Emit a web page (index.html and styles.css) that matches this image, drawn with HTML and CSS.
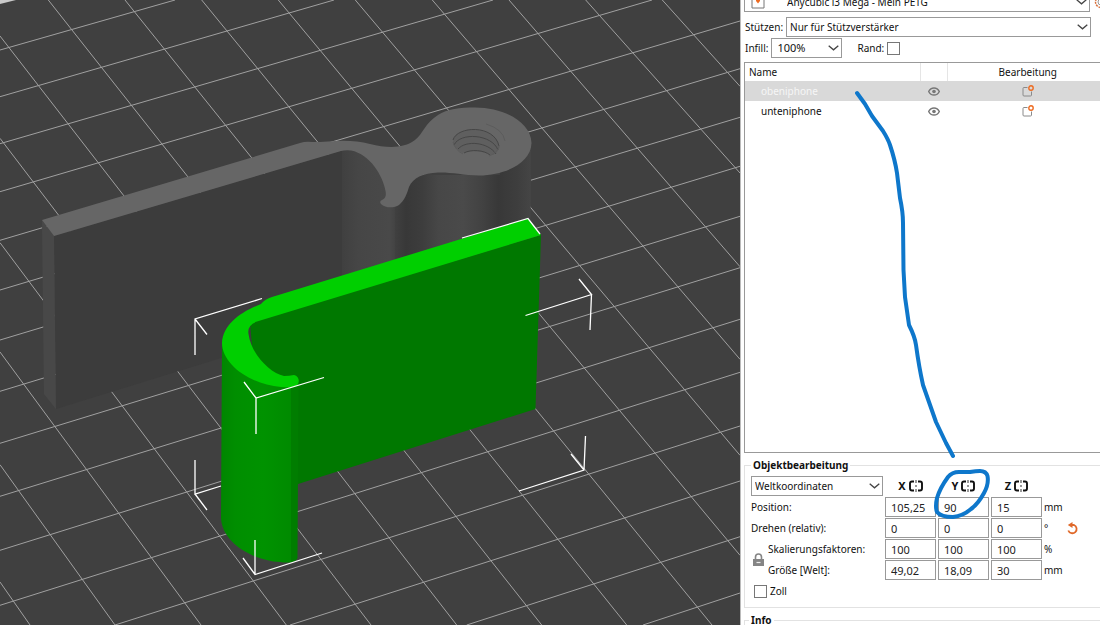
FILE: index.html
```html
<!DOCTYPE html>
<html lang="de">
<head>
<meta charset="utf-8">
<title>Objektbearbeitung</title>
<link rel="stylesheet" href="styles.css">
</head>
<body>
<svg class="defs" aria-hidden="true">
  <symbol id="chevron" viewBox="0 0 11 6"><path d="M.7 .8 5.500 4.800 10.300 .8" fill="none" stroke="#444" stroke-width="1.300"/></symbol>
  <symbol id="eye" viewBox="0 0 12 9"><path d="M.7 4.500C3-.3 9-.3 11.300 4.500 9 9.300 3 9.300.7 4.500Z" fill="none" stroke="#777" stroke-width="1.500"/><circle cx="6" cy="4.500" r="1.800" fill="#777"/></symbol>
  <symbol id="edit" viewBox="0 0 12 12"><path d="M5.500 2.500H2Q1 2.500 1 3.500V10Q1 11 2 11H8.500Q9.500 11 9.500 10V6.500" fill="none" stroke="#8a8a8a" stroke-width="1"/><circle cx="9" cy="3" r="2.200" fill="none" stroke="#ed6b21" stroke-width="1.400"/></symbol>
  <symbol id="mirror" viewBox="0 0 14 12"><path d="M5 1.500H3Q1 1.500 1 3.500V8.500Q1 10.500 3 10.500H5M9 1.500H11Q13 1.500 13 3.500V8.500Q13 10.500 11 10.500H9" fill="none" stroke="#111" stroke-width="1.900"/><path d="M7 0V3M7 5V7M7 9V12" stroke="#333" stroke-width="1"/></symbol>
</svg>
<main class="app">
  <section class="viewport" aria-label="3D-Ansicht">
    <svg class="scene" viewBox="0 0 740 625" preserveAspectRatio="xMidYMid slice">
      <defs>
        <linearGradient id="post" gradientUnits="userSpaceOnUse" x1="395" y1="0" x2="531" y2="0">
          <stop offset="0" stop-color="#404040"/><stop offset=".08" stop-color="#383838"/><stop offset=".2" stop-color="#3d3d3d"/><stop offset=".32" stop-color="#474747"/><stop offset=".5" stop-color="#4a4a4a"/><stop offset=".64" stop-color="#424242"/><stop offset=".76" stop-color="#383838"/><stop offset=".9" stop-color="#3e3e3e"/><stop offset="1" stop-color="#454545"/>
        </linearGradient>
        <linearGradient id="hook" gradientUnits="userSpaceOnUse" x1="342" y1="0" x2="398" y2="0">
          <stop offset="0" stop-color="#404040"/><stop offset=".3" stop-color="#464646"/><stop offset=".85" stop-color="#494949"/><stop offset="1" stop-color="#404040"/>
        </linearGradient>
        <linearGradient id="curve" gradientUnits="userSpaceOnUse" x1="221" y1="0" x2="292" y2="0">
          <stop offset="0" stop-color="#008500"/><stop offset=".2" stop-color="#008e00"/><stop offset=".6" stop-color="#009200"/><stop offset="1" stop-color="#008a00"/>
        </linearGradient>
      </defs>
      <rect width="740" height="625" fill="#404040"/>
      <path d="M0 0H16L0 4Z" fill="#c9c9c9"/>
      <path fill="none" stroke="#a0a0a0" stroke-width="1" d="M0 50 175 0M0 96.700 334 0M0 143.700 493 0M0 191.700 652 0M0 240.300 740 21M0 290 740 68.700M0 340 740 117.300M0 391.300 740 166.300M0 443.300 740 216.300M0 496.300 740 267.700M0 550.300 740 319.300M0 605.300 740 372.300M115 625 740 426M290 625 740 481M466.700 625 740 536.700M643 625 740 593"/>
      <path fill="none" stroke="#a0a0a0" stroke-width="1" d="M0 582 30 625M0 464.700 115 625M0 352 201 625M0 242.700 286.300 625M0 138.300 371 625M0 36 456.700 625M48.300 0 541.700 625M125 0 626.700 625M201.700 0 712 625M278.300 0 740 555.300M355.300 0 740 455.300M432.300 0 740 359.300M509 0 740 266.700M585.700 0 740 173M662.300 0 740 86.300"/>
      <path fill="#3c3c3c" d="M54 236 344 150V320L56 409Z"/>
      <path fill="#484848" d="M42 220 54 236 56 409 44 394Z"/>
      <path fill="url(#hook)" d="M342 149 351 149 380 160 392 190 398 205V300H342Z"/>
      <path fill="url(#post)" d="M395 200 412 175H531L530 240 395 290Z"/>
      <path fill="url(#post)" d="M500 170 531 143 530 240H500Z"/>
      <path fill="#666" d="M42 220 300 143Q306 141 312 142L320 142 336 141Q354 140 370 144C387 148 403 149 415 140C423 134 425 123 438 115C447 109 460 107.500 475 107.500C505 107.500 531 123 531.500 143C531 163 506 175 479 175.500C463 175 450 172 438 172.500C423 173 413 178 409 187C407 194 404 201 399 205C394 208.500 385 208 381 204Q379 201 382 200Q387 198 385.500 191C383 176 370 154 351 150.500Q345 150 341 151L54 236Z"/>
      <path fill="#5f5f5f" d="M453 142C453 125 497 125 499.500 147Q498 154 491 155C480 150 468 151 463 153Q454 149 453 142Z"/>
      <g fill="none" stroke="#464646" stroke-width="1">
        <path d="M453 140C457 126 494 124 499 146"/>
        <path d="M454 145C460 132 492 134 498 150M458 149C466 140 488 142 496 154M464 153C471 149 484 150 490 155"/>
        <path stroke="#5c5c5c" d="M486 124Q503 129 505 141M453 142Q455 150 463 154M499.500 145Q498 153 489 156"/>
      </g>
      <path fill="#007800" d="M250 322 541 235 535.500 409 298 484 260 440Z"/>
      <path fill="url(#curve)" d="M222 342 240 371 270 382 293 384V562Q287 563 280 562C251 560 222 542 221 518Z"/>
      <path fill="#007d00" d="M291 384 298.500 379 297.500 558Q296 562 291 562Z"/>
      <path fill="#00cf00" d="M528 218.500 541 235 257 321.500Q247 325 248.500 334C251 354 270 373 284 376Q289 376 294 375C300 376 300 384 296 386Q292 388 281 387C248 384 222 363 222 343C223 324 241 312 261 304Q265 299 272 297Z"/>
      <path fill="none" stroke="#fff" stroke-width="1.300" d="M195 355V319L262 298.500M195 319 207 334.500M244 382 256 398 324 377.500M256 398V434M195 460V494L221 486M195 494 207 510M243 558 255 574.500 322 553M255 574.500V540M579 279 591.500 294.500 525.500 315.500M591.500 294.500 590 330M585.500 436 584 470 519 491M584 470 571 454M462 238 528 218.500 540 234"/>
    </svg>
  </section>
  <aside class="panel">
    <div class="combo combo-preset">
      <svg class="preset-icon" viewBox="0 0 14 14" aria-hidden="true"><path d="M1 1H13V13H1Z" fill="#fff" stroke="#777"/><path d="M5 3H9V6L7 8.500 5 6Z" fill="#ed6b21"/></svg>
      <select aria-label="Drucker"><option>Anycubic i3 Mega - Mein PETG</option></select>
      <svg class="arrow" aria-hidden="true"><use href="#chevron"/></svg>
      <button class="gear" aria-label="Druckereinstellungen"><svg viewBox="0 0 14 14"><circle cx="7" cy="7" r="5.500" fill="none" stroke="#d8703c" stroke-width="1.500" stroke-dasharray="2 1"/><circle cx="7" cy="7" r="3" fill="none" stroke="#999"/></svg></button>
    </div>
    <div class="line line-support">
      <label class="caption" for="support">Stützen:</label>
      <div class="combo"><select id="support"><option>Nur für Stützverstärker</option></select><svg class="arrow" aria-hidden="true"><use href="#chevron"/></svg></div>
    </div>
    <div class="line">
      <label for="infill">Infill:</label>
      <div class="combo combo-infill"><select id="infill"><option>100%</option></select><svg class="arrow" aria-hidden="true"><use href="#chevron"/></svg></div>
      <label class="check-label brim">Rand:<input class="check" type="checkbox"></label>
    </div>
    <div class="objects">
      <table>
        <colgroup><col class="col-name"><col class="col-eye"><col class="col-edit"></colgroup>
        <thead><tr><th>Name</th><th></th><th class="center">Bearbeitung</th></tr></thead>
        <tbody>
          <tr class="selected"><td>obeniphone</td><td class="center"><svg class="eye"><use href="#eye"/></svg></td><td class="center"><svg class="edit"><use href="#edit"/></svg></td></tr>
          <tr><td>unteniphone</td><td class="center"><svg class="eye"><use href="#eye"/></svg></td><td class="center"><svg class="edit"><use href="#edit"/></svg></td></tr>
        </tbody>
      </table>
    </div>
    <fieldset class="group">
      <legend>Objektbearbeitung</legend>
      <div class="fields">
        <div class="combo coords"><select aria-label="Koordinaten"><option>Weltkoordinaten</option></select><svg class="arrow" aria-hidden="true"><use href="#chevron"/></svg></div>
        <button class="axis">X<svg><use href="#mirror"/></svg></button>
        <button class="axis">Y<svg><use href="#mirror"/></svg></button>
        <button class="axis">Z<svg><use href="#mirror"/></svg></button>
        <span class="label first" id="pos">Position:</span>
        <input aria-labelledby="pos" value="105,25"><input aria-labelledby="pos" value="90"><input aria-labelledby="pos" value="15">
        <span class="unit">mm</span>
        <span class="label first" id="rot">Drehen (relativ):</span>
        <input aria-labelledby="rot" value="0"><input aria-labelledby="rot" value="0"><input aria-labelledby="rot" value="0">
        <span class="unit">°</span>
        <button class="reset" aria-label="Drehung zurücksetzen"><svg viewBox="0 0 12 13"><path d="M4.500 3H7A4.300 4.300 0 1 1 1.300 8.500" fill="none" stroke="#e0692a" stroke-width="1.800"/><path d="M.8 3 5.500 0V6Z" fill="#e0692a"/></svg></button>
        <button class="lock" aria-label="Seitenverhältnis sperren"><svg viewBox="0 0 11 14"><path d="M2.500 7V4A3 3 0 0 1 8.500 4V7" fill="none" stroke="#858585" stroke-width="1.600"/><path d="M0 6H11V13H0Z" fill="#858585"/><path d="M3.500 9.500H7.500" stroke="#eee" stroke-width="1.200"/></svg></button>
        <span class="label scale" id="scl">Skalierungsfaktoren:</span>
        <input aria-labelledby="scl" value="100"><input aria-labelledby="scl" value="100"><input aria-labelledby="scl" value="100">
        <span class="unit">%</span>
        <span class="label scale" id="size">Größe [Welt]:</span>
        <input aria-labelledby="size" value="49,02"><input aria-labelledby="size" value="18,09"><input aria-labelledby="size" value="30">
        <span class="unit">mm</span>
        <label class="check-label inches"><input class="check" type="checkbox">Zoll</label>
      </div>
    </fieldset>
    <fieldset class="group info"><legend>Info</legend></fieldset>
    <svg class="ink" viewBox="741 0 359 625" aria-hidden="true">
      <path d="M857 93 865 104 872 116 883 131Q888 139 890 145Q895 160 897 173L900 198Q903 212 903 223L903.500 270 905 297 909 325Q915 337 916 345Q919 367 923 385L936 422 946 443 953 456"/>
      <path d="M970 472Q976 471 980 471Q986 471 987.500 476Q989 484 984 493Q978 504 971 509Q963 516 953 517Q941 517 937 512Q935 507 937 498Q940 488 948 477Q952 472 959 472Z"/>
    </svg>
  </aside>
</main>
</body>
</html>
```
FILE: styles.css
```css
* { box-sizing: border-box; }
body { margin: 0; font: 10px/16px "Noto Sans", "Open Sans", sans-serif; color: #111; background: #fff; }
button { padding: 0; border: 0; background: none; font: inherit; color: inherit; }
svg { display: block; }
.defs { position: absolute; width: 0; height: 0; }
.app { display: flex; height: 100vh; overflow: hidden; }
.viewport { flex: 1; min-width: 0; background: #404040; }
.scene { width: 100%; height: 100%; }
.panel { position: relative; flex: none; width: 360px; height: 100%; display: flex; flex-direction: column; padding-left: 3px; border-left: 1px solid #bbb; overflow: hidden; }

.combo { display: grid; align-items: center; flex: 1; height: 20px; }
.combo > * { grid-area: 1 / 1; }
.combo select { width: 100%; height: 20px; padding: 0 3px; border: 1px solid #999; border-radius: 0; appearance: none; background: #fff; font: inherit; color: #111; }
.arrow { justify-self: end; width: 11px; height: 6px; margin-right: 3px; pointer-events: none; }
.combo-preset { flex: none; grid-template-columns: 1fr 10px; margin-top: -8px; margin-bottom: 5px; }
.combo-preset select { padding-left: 42px; }
.preset-icon { z-index: 1; width: 14px; height: 14px; margin-left: 7px; }
.combo-preset .gear { grid-area: 1 / 2; margin-left: 4px; }
.gear svg { width: 14px; height: 14px; }
.line { display: flex; align-items: center; gap: 3px; height: 20px; margin-bottom: 1px; padding-left: 1px; }
.line-support { padding-right: 9px; }
.combo-infill { flex: none; width: 71px; }
.combo .arrow { z-index: 1; }
.combo-infill select { padding-left: 5px; font-size: 11px; }
.check-label { display: flex; align-items: center; gap: 3px; }
.brim { margin-left: 12px; }
.check { width: 13px; height: 13px; margin: 0; border: 1px solid #777; appearance: none; background: #fff; }

.objects { flex: 1; min-height: 0; margin-top: 3px; border: 1px solid #999; border-right: 0; overflow: hidden; }
table { width: 364px; table-layout: fixed; border-collapse: collapse; }
.col-name { width: 175px; }
.col-eye { width: 27px; }
th, td { height: 20px; padding: 0 0 0 16px; text-align: left; font-weight: normal; }
th { height: 18px; padding-left: 4px; border-right: 1px solid #e5e5e5; }
th.center, td.center { padding: 0; text-align: center; }
.selected { background: #d9d9d9; color: #f6f6f6; }
.eye { width: 12px; height: 9px; margin: 0 auto; }
.edit { width: 12px; height: 12px; margin: 0 auto; }

.group { flex: none; min-width: 0; margin: 4px 0 0; padding: 3px 0 6px 6px; border: 1px solid #e2e2e2; border-right: 0; }
.group legend { height: 16px; margin-left: 0; padding: 0 2px; font-weight: bold; }
.info { height: 10px; margin-top: 7px; padding: 0 0 0 4px; }
.info legend { height: 10px; line-height: 10px; }
.fields { display: grid; grid-template-columns: 15px 115px repeat(3, 51px) 21px 14px; grid-auto-rows: 20px; gap: 1px 2px; align-items: center; }
.coords { grid-column: 1 / 3; }
.axis { display: flex; align-items: center; justify-content: center; gap: 3px; font-size: 11px; font-weight: bold; }
.axis svg { width: 14px; height: 12px; }
.label { white-space: nowrap; }
.first { grid-column: 1 / 3; }
.scale { grid-column: 2; }
.fields input:not(.check) { width: 100%; height: 20px; padding: 0 5px; border: 1px solid #999; font: inherit; font-size: 11px; color: #222; }
.reset svg { width: 12px; height: 13px; }
.lock { grid-area: 4 / 1 / 6 / 2; padding-left: 2px; }
.lock svg { width: 11px; height: 14px; }
.inches { grid-column: 1 / 3; padding-left: 3px; }
.ink { position: absolute; top: 0; left: 0; width: 359px; height: 625px; pointer-events: none; }
.ink path { fill: none; stroke: #0e77cb; stroke-width: 4; stroke-linecap: round; stroke-linejoin: round; }
```
